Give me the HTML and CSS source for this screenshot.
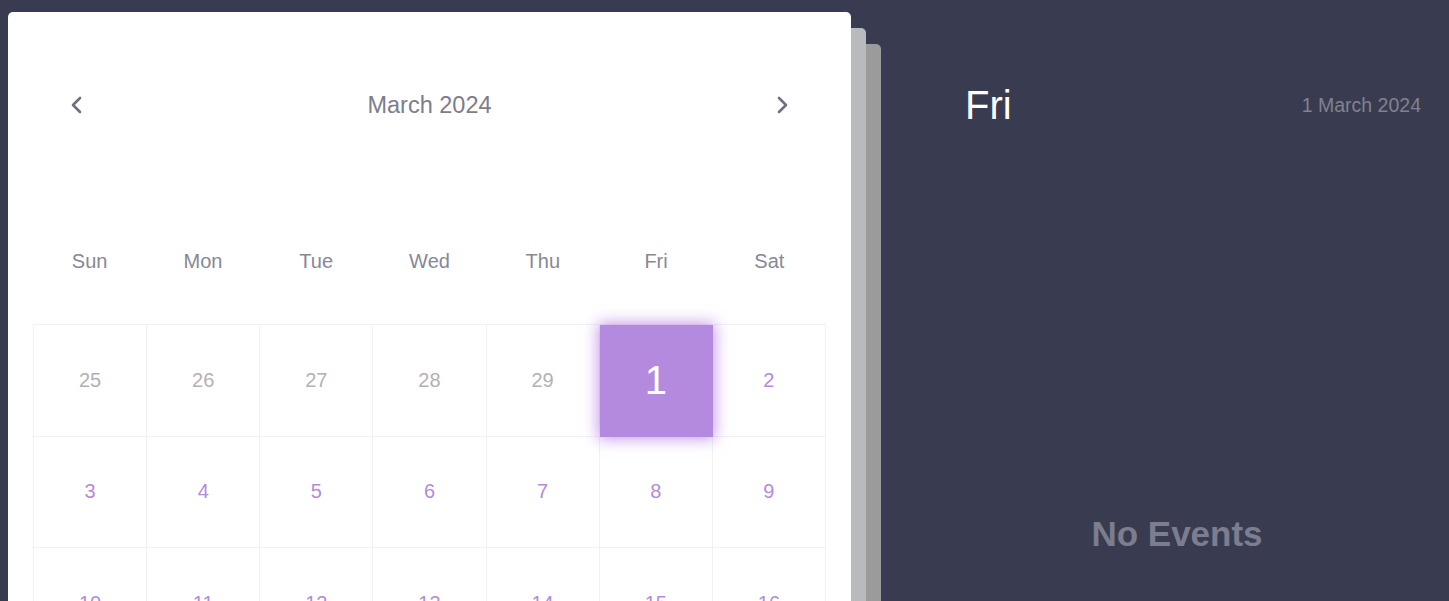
FILE: index.html
```html
<!DOCTYPE html>
<html lang="en">
<head>
<meta charset="utf-8">
<title>Calendar</title>
<link rel="stylesheet" href="styles.css">
</head>
<body>
<div class="app">
  <div class="stack">
    <div class="layer layer-3"></div>
    <div class="layer layer-2"></div>
    <div class="card">
      <div class="cal-header">
        <button class="nav" aria-label="Previous month">
          <svg width="16" height="20" viewBox="0 0 16 20"><path d="M11 3 L4 10 L11 17" fill="none" stroke="currentColor" stroke-width="2.6" stroke-linecap="round" stroke-linejoin="round"/></svg>
        </button>
        <div class="month">March 2024</div>
        <button class="nav" aria-label="Next month">
          <svg width="16" height="20" viewBox="0 0 16 20"><path d="M5 3 L12 10 L5 17" fill="none" stroke="currentColor" stroke-width="2.6" stroke-linecap="round" stroke-linejoin="round"/></svg>
        </button>
      </div>
      <div class="weekdays">
        <div>Sun</div><div>Mon</div><div>Tue</div><div>Wed</div><div>Thu</div><div>Fri</div><div>Sat</div>
      </div>
      <div class="grid">
        <div class="day other">25</div>
        <div class="day other">26</div>
        <div class="day other">27</div>
        <div class="day other">28</div>
        <div class="day other">29</div>
        <div class="day selected">1</div>
        <div class="day">2</div>
        <div class="day">3</div>
        <div class="day">4</div>
        <div class="day">5</div>
        <div class="day">6</div>
        <div class="day">7</div>
        <div class="day">8</div>
        <div class="day">9</div>
        <div class="day">10</div>
        <div class="day">11</div>
        <div class="day">12</div>
        <div class="day">13</div>
        <div class="day">14</div>
        <div class="day">15</div>
        <div class="day">16</div>
      </div>
    </div>
  </div>
  <div class="panel">
    <div class="panel-head">
      <div class="weekday-big">Fri</div>
      <div class="full-date">1 March 2024</div>
    </div>
    <div class="no-events">No Events</div>
  </div>
</div>
</body>
</html>
```

FILE: styles.css
```css
* { box-sizing: border-box; }

html, body {
  margin: 0;
  height: 100%;
  overflow: hidden;
}

body {
  background: #393c50;
  font-family: "Liberation Sans", Arial, sans-serif;
}

.app {
  display: flex;
  padding: 12px 0 0 8px;
  height: 100%;
}

.stack {
  position: relative;
  width: 873px;
  flex: none;
}

.layer {
  position: absolute;
  width: 843px;
  height: 800px;
  border-radius: 5px;
}

.layer-2 {
  left: 15px;
  top: 16px;
  background: #b9babe;
}

.layer-3 {
  left: 30px;
  top: 32px;
  background: #9b9b9b;
}

.card {
  position: relative;
  width: 843px;
  min-height: 800px;
  background: #ffffff;
  border-radius: 5px;
  padding: 70px 25px 0;
}

.cal-header {
  height: 46px;
  display: flex;
  align-items: center;
  justify-content: space-between;
  padding: 0 36px;
}

.nav {
  background: none;
  border: 0;
  padding: 0;
  width: 16px;
  height: 20px;
  color: #6d7080;
  display: flex;
}

.month {
  font-size: 23.5px;
  color: #7c7d8d;
}

.weekdays {
  margin-top: 113px;
  height: 40px;
  display: grid;
  grid-template-columns: repeat(7, 1fr);
  align-items: center;
  text-align: center;
  font-size: 20px;
  color: #878896;
}

.grid {
  margin-top: 43px;
  display: grid;
  grid-template-columns: repeat(7, 1fr);
  border-top: 1px solid #f1f1f3;
  border-left: 1px solid #f1f1f3;
}

.day {
  height: 111.5px;
  border-right: 1px solid #f1f1f3;
  border-bottom: 1px solid #f1f1f3;
  display: flex;
  align-items: center;
  justify-content: center;
  font-size: 20px;
  color: #b48ade;
}

.day.other {
  color: #b2b2b2;
}

.day.selected {
  background: #b48ade;
  color: #ffffff;
  font-size: 40px;
  box-shadow: 0 0 14px 2px rgba(180, 120, 230, 0.75);
  position: relative;
  z-index: 1;
  border-color: #b48ade;
}

.panel {
  flex: 1;
  display: flex;
  flex-direction: column;
  padding: 68px 28px 0 52px;
}

.panel-head {
  height: 50px;
  display: flex;
  align-items: center;
  justify-content: space-between;
}

.weekday-big {
  margin-left: 32px;
  font-size: 40px;
  color: #ffffff;
}

.full-date {
  font-size: 19.5px;
  color: #80828f;
}

.no-events {
  margin-top: 384px;
  text-align: center;
  font-size: 35px;
  font-weight: bold;
  color: #7c7e8f;
}
```
